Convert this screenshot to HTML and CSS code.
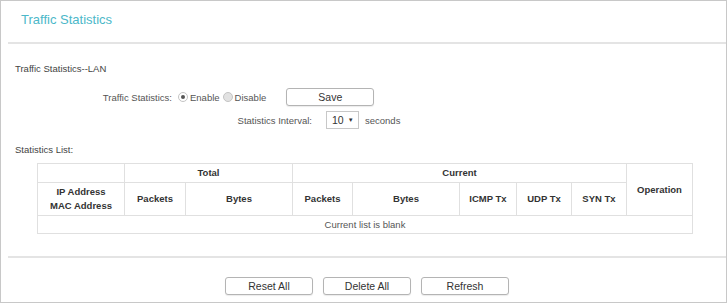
FILE: index.html
```html
<!DOCTYPE html>
<html lang="en">
   <head>
      <meta charset="UTF-8" />
      <title>Traffic Statistics</title>
      <link rel="stylesheet" href="styles.css">
   </head>
   <body>
      <div class="panel">
         <div class="panel-header">
            <h2 class="title">Traffic Statistics</h2>
         </div>
         <div class="content">
            <p class="subtitle">Traffic Statistics--LAN</p>
            <div class="form-row">
               <span class="label label-status">Traffic Statistics:</span>
               <span class="radio checked"></span>
               <span class="radio-text">Enable</span>
               <span class="radio"></span>
               <span class="radio-text">Disable</span>
               <button class="btn btn-save">Save</button>
            </div>
            <div class="form-row row-interval">
               <span class="label label-interval">Statistics Interval:</span>
               <div class="select">10 <span class="caret">&#9660;</span></div>
               <span class="unit">seconds</span>
            </div>
            <p class="subtitle list-title">Statistics List:</p>
            <table class="stats-table">
               <colgroup>
                  <col style="width:87px">
                  <col style="width:61px">
                  <col style="width:107px">
                  <col style="width:60px">
                  <col style="width:107px">
                  <col style="width:57px">
                  <col style="width:55px">
                  <col style="width:55px">
                  <col style="width:66px">
               </colgroup>
               <tr class="row-group">
                  <th></th>
                  <th colspan="2">Total</th>
                  <th colspan="5">Current</th>
                  <th rowspan="2">Operation</th>
               </tr>
               <tr class="row-head">
                  <th>IP Address<br>MAC Address</th>
                  <th>Packets</th>
                  <th>Bytes</th>
                  <th>Packets</th>
                  <th>Bytes</th>
                  <th>ICMP Tx</th>
                  <th>UDP Tx</th>
                  <th>SYN Tx</th>
               </tr>
               <tr class="row-empty">
                  <td colspan="9">Current list is blank</td>
               </tr>
            </table>
         </div>
         <div class="panel-footer">
            <button class="btn">Reset All</button>
            <button class="btn">Delete All</button>
            <button class="btn">Refresh</button>
         </div>
      </div>
   </body>
</html>
```

FILE: styles.css
```css
body {
margin: 0;
font-family: "Liberation Sans", Arial, sans-serif;
color: #555;
background-color: #ffffff;
}
.panel {
box-sizing: border-box;
width: 727px;
height: 303px;
border: 1px solid #c8c8c8;
background-color: #ffffff;
display: flex;
flex-direction: column;
}
.panel-header {
height: 41px;
margin-left: 7px;
border-bottom: 2px solid #e4e4e4;
}
.title {
margin: 0;
padding: 11px 0 0 13px;
font-size: 13px;
line-height: 16px;
font-weight: normal;
color: #4cb8c9;
}
.content {
padding-left: 14px;
}
.subtitle {
margin: 18px 0 0 0;
font-size: 9.5px;
line-height: 13px;
color: #444;
}
.form-row {
display: flex;
align-items: center;
height: 18px;
margin-top: 13px;
font-size: 9.5px;
}
.row-interval {
margin-top: 5px;
}
.label {
text-align: right;
color: #555;
}
.label-status {
width: 157px;
margin-right: 6px;
}
.label-interval {
width: 297px;
margin-right: 14px;
}
.radio {
box-sizing: border-box;
width: 10px;
height: 10px;
border-radius: 50%;
border: 1px solid #c4c4c4;
background-color: #e2e2e2;
}
.radio.checked {
background-color: #ffffff;
display: flex;
align-items: center;
justify-content: center;
}
.radio.checked::after {
content: "";
width: 4px;
height: 4px;
border-radius: 50%;
background-color: #555;
}
.radio-text {
margin: 0 3px 0 2px;
color: #555;
}
.btn {
box-sizing: border-box;
width: 88px;
height: 18px;
padding: 0;
border: 1px solid #b4b4b4;
border-radius: 3px;
background-color: #ffffff;
box-shadow: 0 1px 1px rgba(0,0,0,0.08);
font-family: "Liberation Sans", Arial, sans-serif;
font-size: 10.5px;
color: #333;
}
.btn-save {
margin-left: 17px;
}
.select {
box-sizing: border-box;
width: 33px;
height: 18px;
border: 1px solid #c8c8c8;
display: flex;
align-items: center;
padding-left: 5px;
font-size: 10.5px;
color: #333;
}
.caret {
font-size: 6px;
margin-left: 4px;
}
.unit {
margin-left: 6px;
}
.list-title {
margin-top: 14px;
}
.stats-table {
margin: 7px 0 0 22px;
width: 655px;
table-layout: fixed;
border-collapse: collapse;
font-size: 9.5px;
}
.stats-table th,
.stats-table td {
border: 1px solid #e0e0e0;
padding: 0;
text-align: center;
}
.stats-table th {
color: #333;
font-weight: bold;
line-height: 14px;
}
.row-group th {
height: 18px;
}
.row-head th {
height: 32px;
}
.row-empty td {
height: 17px;
color: #555;
}
.panel-footer {
margin: 22px 0 0 7px;
border-top: 2px solid #e4e4e4;
padding-top: 19px;
display: flex;
justify-content: center;
gap: 10px;
}
```
